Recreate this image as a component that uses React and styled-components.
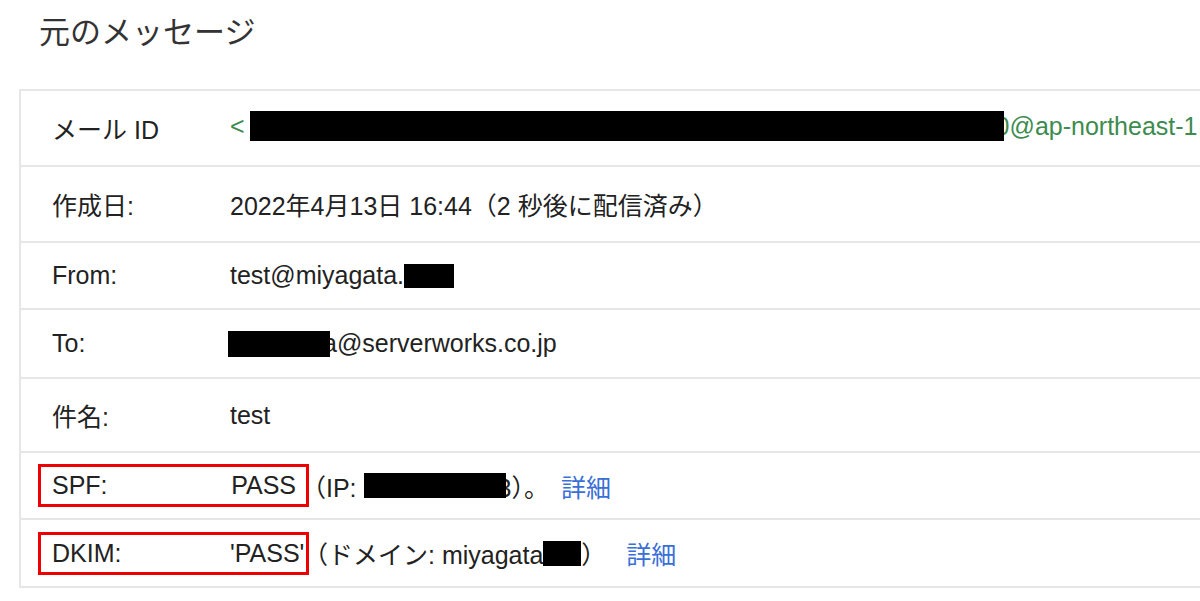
import React from "react";
import styled, { createGlobalStyle } from "styled-components";

const GlobalStyle = createGlobalStyle`
  html, body {
    margin: 0;
    padding: 0;
    background: #ffffff;
    overflow: hidden;
  }
  body {
    font-family: "Liberation Sans", Arial, "Noto Sans CJK JP", sans-serif;
    color: #222222;
  }
`;

const rows = [
  { label: "メール ID", h: 76 },
  { label: "作成日:", h: 76 },
  { label: "From:", h: 67 },
  { label: "To:", h: 69 },
  { label: "件名:", h: 74 },
];

const App = () => {
  return (
    <>
      <GlobalStyle />
      <Page>
        <Title>元のメッセージ</Title>
        <Table>
          {/* メール ID */}
          <Row $h={rows[0].h}>
            <Label>{rows[0].label}</Label>
            <Value $color="#3d8b4f" $mt={-4}>
              &lt;
              <Redact $w={754} $h={30} $ml={5} $overlap={8} />
              0@ap-northeast-1
            </Value>
          </Row>

          {/* 作成日 */}
          <Row $h={rows[1].h}>
            <Label>{rows[1].label}</Label>
            <Value>2022年4月13日 16:44（2 秒後に配信済み）</Value>
          </Row>

          {/* From */}
          <Row $h={rows[2].h}>
            <Label>{rows[2].label}</Label>
            <Value>
              test@miyagata.
              <Redact $w={50} $h={24} />
            </Value>
          </Row>

          {/* To */}
          <Row $h={rows[3].h}>
            <Label>{rows[3].label}</Label>
            <Value>
              <Redact $w={102} $h={26} $ml={-2} $overlap={7} />
              a@serverworks.co.jp
            </Value>
          </Row>

          {/* 件名 */}
          <Row $h={rows[4].h}>
            <Label>{rows[4].label}</Label>
            <Value>test</Value>
          </Row>

          {/* SPF */}
          <Row $h={67} $framed>
            <Frame $pr={10}>
              <Label>SPF:</Label>
              <Value>PASS</Value>
            </Frame>
            <Value $ml={-8}>
              （IP:&nbsp;
              <Redact $w={142} $h={25} $overlap={8} />
              3）。
              <Link $ml={12}>詳細</Link>
            </Value>
          </Row>

          {/* DKIM */}
          <Row $h={66} $framed $last>
            <Frame $pr={4}>
              <Label>DKIM:</Label>
              <Value>'PASS'</Value>
            </Frame>
            <Value $ml={-6}>
              （ドメイン: miyagata
              <Redact $w={38} $h={25} />
              ）
              <Link $ml={20}>詳細</Link>
            </Value>
          </Row>
        </Table>
      </Page>
    </>
  );
};

const Page = styled.main`
  width: 1200px;
  height: 601px;
  overflow: hidden;
`;

const Title = styled.h1`
  margin: 0;
  height: 89px;
  box-sizing: border-box;
  padding: 14px 0 0 39px;
  font-family: "Liberation Sans", "Noto Sans CJK JP", sans-serif;
  font-size: 31px;
  font-weight: normal;
  line-height: 38px;
  color: #333333;
`;

const Table = styled.section`
  margin-left: 19px;
  width: 1300px;
  border: 2px solid #e6e6e6;
  border-right: none;
  display: flex;
  flex-direction: column;
`;

const Row = styled.div`
  height: ${(p) => p.$h}px;
  box-sizing: border-box;
  display: flex;
  align-items: center;
  padding-left: ${(p) => (p.$framed ? 17 : 31)}px;
  border-bottom: ${(p) => (p.$last ? "none" : "2px solid #e6e6e6")};
  font-size: 25px;
  white-space: nowrap;
`;

const Frame = styled.div`
  width: 271px;
  height: 43px;
  box-sizing: border-box;
  border: 3px solid #ee0000;
  padding: 0 ${(p) => p.$pr}px 0 11px;
  display: flex;
  align-items: center;
  justify-content: space-between;
`;

const Label = styled.span`
  width: 178px;
  flex-shrink: 0;
  color: #222222;
`;

const Value = styled.span`
  display: inline-flex;
  align-items: center;
  margin-left: ${(p) => p.$ml || 0}px;
  margin-top: ${(p) => p.$mt || 0}px;
  color: ${(p) => p.$color || "#222222"};
`;

const Redact = styled.span`
  position: relative;
  z-index: 1;
  display: inline-block;
  width: ${(p) => p.$w}px;
  height: ${(p) => p.$h}px;
  background: #000000;
  margin-left: ${(p) => p.$ml || 0}px;
  margin-right: ${(p) => -(p.$overlap || 0)}px;
`;

const Link = styled.span`
  margin-left: ${(p) => p.$ml}px;
  color: #3a6fd8;
  cursor: pointer;
`;

export default App;
